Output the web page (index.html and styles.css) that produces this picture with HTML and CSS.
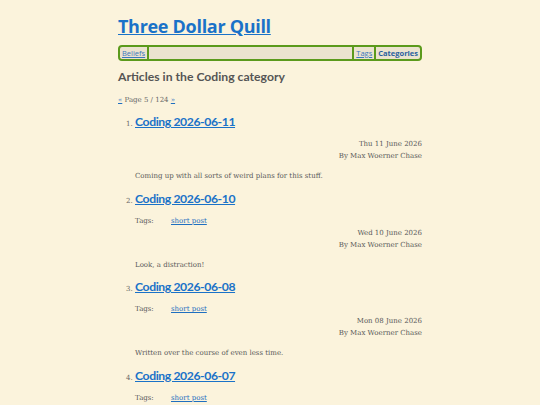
FILE: index.html
```html
<!DOCTYPE html>
<html lang="en">
<head>
<meta charset="utf-8">
<title>Three Dollar Quill</title>
<link rel="stylesheet" href="styles.css">
</head>
<body>
<div class="page">
  <header class="site-header">
    <h1 class="site-title"><a href="#">Three Dollar Quill</a></h1>
    <nav class="nav">
      <a class="nav-link" href="#">Beliefs</a>
      <span class="nav-spacer"></span>
      <a class="nav-link" href="#">Tags</a>
      <a class="nav-link nav-current" href="#">Categories</a>
    </nav>
  </header>
  <main>
    <h2 class="page-heading">Articles in the Coding category</h2>
    <p class="pager"><a href="#">«</a> Page 5 / 124 <a href="#">»</a></p>
    <ol class="articles">
      <li class="article">
        <h3 class="article-title"><a href="#">Coding 2026-06-11</a></h3>
        <div class="meta">
          <div class="meta-line">Thu 11 June 2026</div>
          <div class="meta-line">By Max Woerner Chase</div>
        </div>
        <p class="summary">Coming up with all sorts of weird plans for this stuff.</p>
      </li>
      <li class="article">
        <h3 class="article-title"><a href="#">Coding 2026-06-10</a></h3>
        <div class="tags"><span class="tags-label">Tags:</span><a href="#">short post</a></div>
        <div class="meta">
          <div class="meta-line">Wed 10 June 2026</div>
          <div class="meta-line">By Max Woerner Chase</div>
        </div>
        <p class="summary">Look, a distraction!</p>
      </li>
      <li class="article">
        <h3 class="article-title"><a href="#">Coding 2026-06-08</a></h3>
        <div class="tags"><span class="tags-label">Tags:</span><a href="#">short post</a></div>
        <div class="meta">
          <div class="meta-line">Mon 08 June 2026</div>
          <div class="meta-line">By Max Woerner Chase</div>
        </div>
        <p class="summary">Written over the course of even less time.</p>
      </li>
      <li class="article">
        <h3 class="article-title"><a href="#">Coding 2026-06-07</a></h3>
        <div class="tags"><span class="tags-label">Tags:</span><a href="#">short post</a></div>
      </li>
    </ol>
  </main>
</div>
</body>
</html>
```

FILE: styles.css
```css
html, body {
  margin: 0;
  padding: 0;
  background: #fbf3dc;
}
body {
  font-family: "DejaVu Serif", serif;
  color: #595959;
  overflow: hidden;
}
.page {
  width: 304px;
  margin: 0 auto;
  padding-top: 14px;
}
a {
  color: #1f6fc0;
}
.site-title {
  margin: 0;
  font-family: "Open Sans", sans-serif;
  font-size: 18px;
  font-weight: 700;
  line-height: 24px;
  letter-spacing: -0.3px;
}
.site-title a {
  color: #1a72c8;
}
.nav {
  display: flex;
  margin-top: 7px;
  height: 12px;
  border: 2px solid #5b9a1c;
  border-radius: 4px;
  background: #ebe3cf;
  font-family: "Open Sans", sans-serif;
  font-size: 7.5px;
  line-height: 12px;
}
.nav-link {
  padding: 0 2px;
  color: #3a78bd;
}
.nav-spacer {
  flex: 1;
  border-left: 2px solid #5b9a1c;
  border-right: 2px solid #5b9a1c;
}
.nav-link + .nav-link {
  border-left: 2px solid #5b9a1c;
}
.nav-current {
  font-weight: 700;
  text-decoration: none;
  color: #2a5f9e;
}
.page-heading {
  margin: 8px 0 0;
  font-family: Lato, sans-serif;
  font-size: 12.2px;
  line-height: 16px;
  font-weight: 700;
  color: #555;
}
.pager {
  margin: 9px 0 0;
  font-size: 7px;
  line-height: 12px;
  color: #666;
}
.articles {
  margin: 7px 0 0;
  padding-left: 17px;
  list-style: decimal;
}
.article {
  font-size: 7px;
}
.article + .article {
  margin-top: 7.5px;
}
.article::marker {
  font-size: 7px;
  color: #666;
}
.article-title {
  margin: 0;
  font-family: Lato, sans-serif;
  font-size: 12.2px;
  line-height: 18px;
  font-weight: 700;
  letter-spacing: -0.4px;
}
.article-title a {
  color: #1a72c8;
}
.tags {
  display: flex;
  margin-top: 7px;
  line-height: 12px;
}
.tags-label {
  width: 36px;
}
.meta {
  margin-top: 7px;
  text-align: right;
  line-height: 12px;
}
.tags + .meta {
  margin-top: 0;
}
.summary {
  margin: 8px 0 0;
  line-height: 12px;
}
```
